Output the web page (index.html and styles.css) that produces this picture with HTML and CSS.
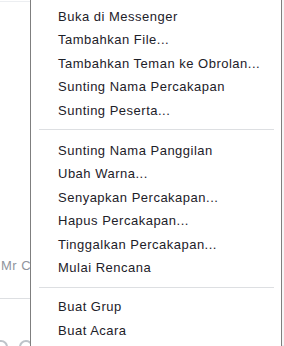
FILE: index.html
```html
<!DOCTYPE html>
<html lang="id">
<head>
    <meta charset="UTF-8">
    <meta name="viewport" content="width=device-width, initial-scale=1.0">
    <title>Menu Percakapan</title>
    <link rel="stylesheet" href="styles.css">
</head>
<body>
    <div class="chat-pane">
        <div class="chat-top"></div>
        <div class="chat-spacer"></div>
        <div class="composer">Mr C</div>
        <div class="chat-tools">
            <svg width="30" height="12" viewBox="0 0 30 12">
                <circle cx="1" cy="13" r="6" fill="none" stroke="#bec3c9" stroke-width="2"/>
                <circle cx="26" cy="13" r="6" fill="none" stroke="#bec3c9" stroke-width="2"/>
            </svg>
        </div>
    </div>

    <ul class="menu">
        <li>Buka di Messenger</li>
        <li>Tambahkan File...</li>
        <li>Tambahkan Teman ke Obrolan...</li>
        <li>Sunting Nama Percakapan</li>
        <li>Sunting Peserta...</li>
        <li class="separator"></li>
        <li>Sunting Nama Panggilan</li>
        <li>Ubah Warna...</li>
        <li>Senyapkan Percakapan...</li>
        <li>Hapus Percakapan...</li>
        <li>Tinggalkan Percakapan...</li>
        <li>Mulai Rencana</li>
        <li class="separator wide"></li>
        <li>Buat Grup</li>
        <li>Buat Acara</li>
    </ul>

    <div class="side-strip"></div>
</body>
</html>
```

FILE: styles.css
```css
body {
    margin: 0;
    width: 284px;
    height: 346px;
    overflow: hidden;
    position: relative;
    background-color: #ffffff;
    font-family: "Liberation Sans", Arial, sans-serif;
    font-size: 13px;
    letter-spacing: 0.5px;
}

/* chat window behind the menu */
.chat-pane {
    display: flex;
    flex-direction: column;
    width: 30px;
    height: 346px;
}

.chat-top {
    height: 1px;
    margin-top: 1px;
    background-color: #eceef1;
}

.chat-spacer {
    flex: 1;
}

.composer {
    color: #90949c;
    padding: 0 0 24px 1px;
    line-height: 16px;
    border-bottom: 1px solid #dddfe2;
    white-space: nowrap;
    overflow: hidden;
}

.chat-tools {
    height: 47px;
    display: flex;
    align-items: flex-end;
}

.chat-tools svg {
    display: block;
}

/* context menu */
.menu {
    position: absolute;
    top: 0;
    left: 30px;
    width: 250px;
    height: 346px;
    margin: 0;
    padding: 5px 0 0;
    list-style: none;
    background-color: #ffffff;
    border-left: 1px solid #7f7f7f;
    border-right: 1px solid #7f7f7f;
    box-sizing: content-box;
}

.menu li {
    height: 23.4px;
    line-height: 23.4px;
    padding-left: 27px;
    color: #1d2129;
    white-space: nowrap;
}

.menu li.separator {
    height: 1px;
    padding: 0;
    margin: 7px 7px 9px 8px;
    background-color: #dddfe2;
}

.menu li.separator.wide {
    margin: 8px 7px 7px 8px;
}

.side-strip {
    position: absolute;
    top: 0;
    right: 0;
    width: 2px;
    height: 346px;
    background-color: #f5f6f7;
    border-bottom: 1px solid #e9ebee;
    box-sizing: border-box;
}
```
